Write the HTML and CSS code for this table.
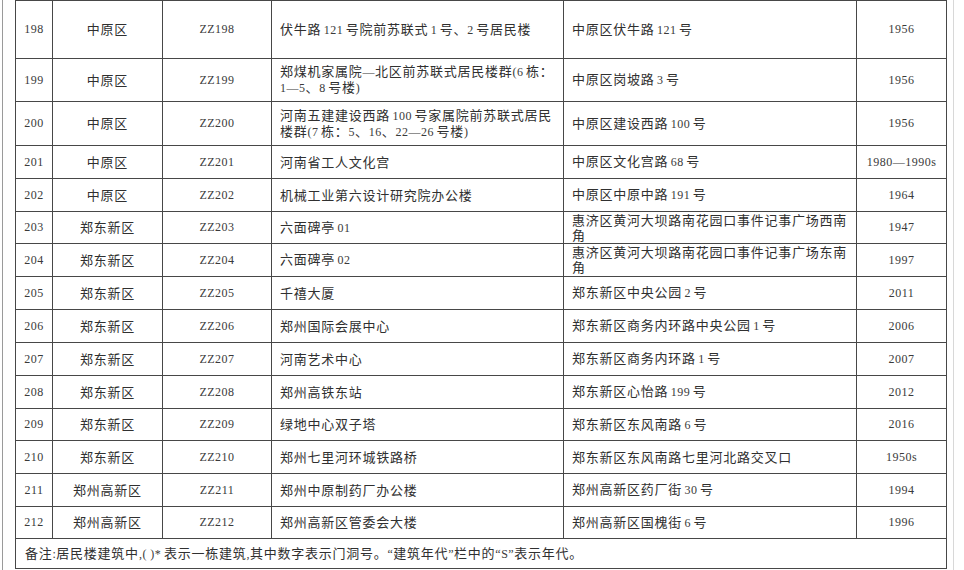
FILE: index.html
```html
<!DOCTYPE html>
<html lang="zh-CN">
<head>
<meta charset="utf-8">
<title>建筑名录</title>
<link rel="stylesheet" href="styles.css">
</head>
<body>
<div class="page">
<table class="list">
<colgroup>
<col class="c-no"><col class="c-dist"><col class="c-code"><col class="c-name"><col class="c-addr"><col class="c-year">
</colgroup>
<tbody>
<tr class="h58"><td class="ctr lat">198</td><td class="ctr">中原区</td><td class="ctr lat">ZZ198</td><td>伏牛路 <span class="n">121</span> 号院前苏联式 <span class="n">1</span> 号、<span class="n">2</span> 号居民楼</td><td>中原区伏牛路 <span class="n">121</span> 号</td><td class="ctr lat">1956</td></tr>
<tr class="h43"><td class="ctr lat">199</td><td class="ctr">中原区</td><td class="ctr lat">ZZ199</td><td>郑煤机家属院<span class="n">—</span>北区前苏联式居民楼群<span class="n">(6</span> 栋：<br><span class="n">1—5</span>、<span class="n">8</span> 号楼<span class="n">)</span></td><td>中原区岗坡路 <span class="n">3</span> 号</td><td class="ctr lat">1956</td></tr>
<tr class="h44"><td class="ctr lat">200</td><td class="ctr">中原区</td><td class="ctr lat">ZZ200</td><td>河南五建建设西路 <span class="n">100</span> 号家属院前苏联式居民<br>楼群<span class="n">(7</span> 栋：<span class="n">5</span>、<span class="n">16</span>、<span class="n">22—26</span> 号楼<span class="n">)</span></td><td>中原区建设西路 <span class="n">100</span> 号</td><td class="ctr lat">1956</td></tr>
<tr class="h33"><td class="ctr lat">201</td><td class="ctr">中原区</td><td class="ctr lat">ZZ201</td><td>河南省工人文化宫</td><td>中原区文化宫路 <span class="n">68</span> 号</td><td class="ctr lat">1980—1990s</td></tr>
<tr class="h33"><td class="ctr lat">202</td><td class="ctr">中原区</td><td class="ctr lat">ZZ202</td><td>机械工业第六设计研究院办公楼</td><td>中原区中原中路 <span class="n">191</span> 号</td><td class="ctr lat">1964</td></tr>
<tr class="h32"><td class="ctr lat">203</td><td class="ctr">郑东新区</td><td class="ctr lat">ZZ203</td><td>六面碑亭 <span class="n">01</span></td><td>惠济区黄河大坝路南花园口事件记事广场西南<br>角</td><td class="ctr lat">1947</td></tr>
<tr class="h33"><td class="ctr lat">204</td><td class="ctr">郑东新区</td><td class="ctr lat">ZZ204</td><td>六面碑亭 <span class="n">02</span></td><td>惠济区黄河大坝路南花园口事件记事广场东南<br>角</td><td class="ctr lat">1997</td></tr>
<tr class="h33"><td class="ctr lat">205</td><td class="ctr">郑东新区</td><td class="ctr lat">ZZ205</td><td>千禧大厦</td><td>郑东新区中央公园 <span class="n">2</span> 号</td><td class="ctr lat">2011</td></tr>
<tr class="h33"><td class="ctr lat">206</td><td class="ctr">郑东新区</td><td class="ctr lat">ZZ206</td><td>郑州国际会展中心</td><td>郑东新区商务内环路中央公园 <span class="n">1</span> 号</td><td class="ctr lat">2006</td></tr>
<tr class="h33"><td class="ctr lat">207</td><td class="ctr">郑东新区</td><td class="ctr lat">ZZ207</td><td>河南艺术中心</td><td>郑东新区商务内环路 <span class="n">1</span> 号</td><td class="ctr lat">2007</td></tr>
<tr class="h33"><td class="ctr lat">208</td><td class="ctr">郑东新区</td><td class="ctr lat">ZZ208</td><td>郑州高铁东站</td><td>郑东新区心怡路 <span class="n">199</span> 号</td><td class="ctr lat">2012</td></tr>
<tr class="h32"><td class="ctr lat">209</td><td class="ctr">郑东新区</td><td class="ctr lat">ZZ209</td><td>绿地中心双子塔</td><td>郑东新区东风南路 <span class="n">6</span> 号</td><td class="ctr lat">2016</td></tr>
<tr class="h33"><td class="ctr lat">210</td><td class="ctr">郑东新区</td><td class="ctr lat">ZZ210</td><td>郑州七里河环城铁路桥</td><td>郑东新区东风南路七里河北路交叉口</td><td class="ctr lat">1950s</td></tr>
<tr class="h33"><td class="ctr lat">211</td><td class="ctr">郑州高新区</td><td class="ctr lat">ZZ211</td><td>郑州中原制药厂办公楼</td><td>郑州高新区药厂街 <span class="n">30</span> 号</td><td class="ctr lat">1994</td></tr>
<tr class="h32"><td class="ctr lat">212</td><td class="ctr">郑州高新区</td><td class="ctr lat">ZZ212</td><td>郑州高新区管委会大楼</td><td>郑州高新区国槐街 <span class="n">6</span> 号</td><td class="ctr lat">1996</td></tr>
<tr class="h30"><td class="note" colspan="6">备注<span class="n">:</span>居民楼建筑中<span class="n">,( )*</span> 表示一栋建筑<span class="n">,</span>其中数字表示门洞号。<span class="n">“</span>建筑年代<span class="n">”</span>栏中的<span class="n">“S”</span>表示年代。</td></tr>
</tbody>
</table>
</div>
</body>
</html>
```

FILE: styles.css
```css
html, body {
  margin: 0;
  padding: 0;
  background: #ffffff;
}

.page {
  margin-left: 2px;
  width: 950px;
  height: 570px;
  border-left: 1px solid #9a9a9a;
  border-right: 1px solid #d8d8d8;
  overflow: hidden;
}

.list {
  margin-left: 12px;
  width: 932px;
  table-layout: fixed;
  border-collapse: collapse;
  font-family: "Liberation Serif", "Noto Sans CJK SC", serif;
  font-size: 13px;
  letter-spacing: 0.75px;
  word-spacing: -1.5px;
  color: #303030;
  line-height: 15px;
}

.c-no { width: 37px; }
.c-dist { width: 110px; }
.c-code { width: 109px; }
.c-name { width: 292px; }
.c-addr { width: 293px; }
.c-year { width: 90px; }

.list td {
  border: 1px solid #474747;
  padding: 0 0 0 8px;
  vertical-align: middle;
  white-space: nowrap;
  overflow: hidden;
}

.list td.ctr {
  text-align: center;
  padding: 0;
}

.list td.lat,
.list .n {
  font-size: 12px;
  letter-spacing: 0.5px;
  word-spacing: 0;
  color: #3a3a3a;
}

.list td.note {
  padding-left: 9px;
}

.h58 { height: 58px; }
.h44 { height: 44px; }
.h43 { height: 43px; }
.h33 { height: 33px; }
.h32 { height: 32px; }
.h30 { height: 30px; }
```
